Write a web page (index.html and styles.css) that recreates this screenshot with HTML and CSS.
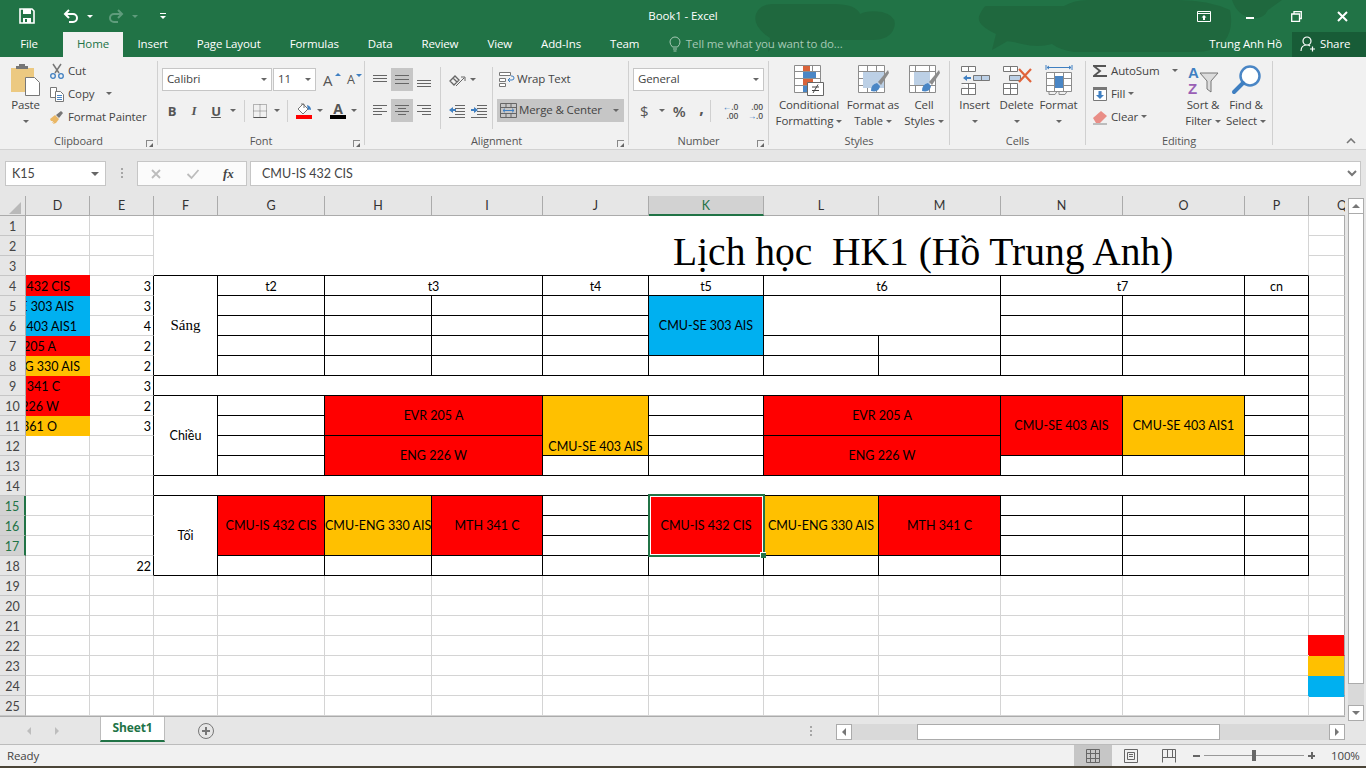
FILE: index.html
```html
<!DOCTYPE html>
<html lang="en">
<head>
  <meta charset="UTF-8">
  <title>Book1 - Excel</title>
  <link rel="stylesheet" href="styles.css">
</head>
<body>
<div class="window">

  <div class="chrome">
    <svg class="texture" width="1366" height="57" viewBox="0 0 1366 57">
      <path d="M772 4h62q22 0 26 10 8-4 22-2 16 4 12 16-4 12-22 12h-40q-12 8-30 6-14-2-26-2l-8 8 2-14q-18-12-14-24 4-10 16-10z"/>
      <path d="M986 6h78q10-6 24-6h90q30 0 52 10 4 20-6 32-10 10-30 10h-120q-14-2-22-8-14 4-30 0-16-4-16-2l-14 8 4-16q-22-10-16-20 4-8 6-8z"/>
      <path d="M1232 0h50l-14 10q-4 8-12 8-18 0-24-18z"/>
    </svg>
    <header class="titlebar">
      <div class="qat">
        <svg class="q-save" width="16" height="16" viewBox="0 0 16 16"><path d="M1 1h12l2 2v12H1z" fill="none" stroke="#fff" stroke-width="1.6"/><path d="M4 1h8v5H4zM4 10h8v5H4z" fill="#fff"/><path d="M6 11h2v3H6z" fill="#217346"/></svg>
        <svg class="q-undo" width="16" height="14" viewBox="0 0 16 14"><path d="M6 1 2 5l4 4M2 5h8a3.6 3.6 0 0 1 0 8H6" fill="none" stroke="#fff" stroke-width="2"/></svg>
        <i class="caret white q-c1"></i>
        <svg class="q-redo" width="16" height="14" viewBox="0 0 16 14"><path d="m10 1 4 4-4 4M14 5H6a3.6 3.6 0 0 0 0 8h4" fill="none" stroke="#5f9c7c" stroke-width="2"/></svg>
        <i class="caret dim q-c2"></i>
        <span class="q-more"><i></i><i class="caret white"></i></span>
      </div>
      <div class="doc-title">Book1 - Excel</div>
      <div class="win-btns">
        <svg width="14" height="11" viewBox="0 0 14 11"><path d="M.5.500h13v10H.5zM.5 2.500h13" fill="none" stroke="#fff"/><path d="m7 4 2.500 2.500h-1.500V9H6V6.500H4.500z" fill="#fff"/></svg>
        <svg width="10" height="10" viewBox="0 0 10 10"><path d="M1 6h8v2H1z" fill="#fff"/></svg>
        <svg width="11" height="11" viewBox="0 0 11 11"><path d="M3 2.500V.7h7.300v6.800H8.500M.7 3h7.800v7.300H.7z" fill="none" stroke="#fff" stroke-width="1.300"/></svg>
        <svg width="11" height="11" viewBox="0 0 11 11"><path d="m1 1 9 9M10 1l-9 9" stroke="#fff" stroke-width="2"/></svg>
      </div>
    </header>
    <nav class="tabs">
      <a class="tab tab-file">File</a>
      <a class="tab active">Home</a>
      <a class="tab">Insert</a>
      <a class="tab">Page Layout</a>
      <a class="tab">Formulas</a>
      <a class="tab">Data</a>
      <a class="tab">Review</a>
      <a class="tab">View</a>
      <a class="tab">Add-Ins</a>
      <a class="tab">Team</a>
      <span class="tell">
        <svg width="12" height="16" viewBox="0 0 12 16"><path d="M3.500 11Q1 8.500 1 6a5 5 0 0 1 10 0q0 2.500-2.500 5zM4 13h4M4.500 15h3" fill="none" stroke="#a6c9b5"/></svg>
        Tell me what you want to do...
      </span>
      <span class="user">Trung Anh Hồ</span>
      <span class="share">
        <svg width="16" height="16" viewBox="0 0 16 16"><path d="M7 9a4 4 0 1 0 0-8 4 4 0 0 0 0 8zM1 15q0-6 6-6 2 0 3 1M10 13h5M12.500 10.500v5" fill="none" stroke="#fff" stroke-width="1.200"/></svg>
        Share
      </span>
    </nav>
  </div>

  <div class="ribbon">

    <section class="group g-clip">
      <div class="body">
        <button class="big b-paste">
          <svg width="32" height="32" viewBox="0 0 32 32"><path d="M1 4h23v24H1z" fill="#ecc981"/><path d="M6 4V2h3V0h6v2h3v3H6z" fill="#767676"/><path d="M15.500 13.500h9l5 5v13h-14z" fill="#fff" stroke="#777"/></svg>
          <span>Paste</span><i class="caret"></i>
        </button>
        <div class="stack">
          <button class="small"><svg width="16" height="16" viewBox="0 0 16 16"><path d="M4 1l6 9M12 1 6 10" stroke="#777" stroke-width="1.500" fill="none"/><circle cx="4" cy="13" r="2.300" fill="none" stroke="#3f7fc1" stroke-width="1.300"/><circle cx="12" cy="13" r="2.300" fill="none" stroke="#3f7fc1" stroke-width="1.300"/></svg>Cut</button>
          <button class="small"><svg width="16" height="16" viewBox="0 0 16 16"><path d="M1.500 1.500h6v10h-6z" fill="#fff" stroke="#777"/><path d="M6.500 5.500h5l3 3v7h-8z" fill="#fff" stroke="#777"/><path d="M8 9.500h5M8 11.500h5M8 13.500h5" stroke="#4a86c5"/></svg>Copy<i class="caret c-copy"></i></button>
          <button class="small"><svg width="16" height="16" viewBox="0 0 16 16"><path d="M1 10l5-4 4 4-3 4-3 1 1-2-2 1 1-2-2 0z" fill="#eab765"/><path d="M7 6l5-4 2 2-4 5z" fill="#777"/></svg>Format Painter</button>
        </div>
      </div>
      <div class="label">Clipboard</div>
      <i class="launcher"></i>
    </section>

    <section class="group g-font">
      <div class="body col">
        <div class="row r-top">
          <div class="combo c-name"><span>Calibri</span><i class="caret"></i></div>
          <div class="combo c-size"><span>11</span><i class="caret"></i></div>
          <span class="grow-a big-a">A<i class="mini up"></i></span>
          <span class="grow-a small-a">A<i class="mini down"></i></span>
        </div>
        <div class="row r-low">
          <span class="fmt f-b">B</span>
          <span class="fmt f-i">I</span>
          <span class="fmt f-u">U</span>
          <i class="caret c-u"></i>
          <i class="vsep"></i>
          <svg class="f-border" width="14" height="14" viewBox="0 0 14 14"><path d="M.5.500h13v13H.5zM7 .5v13M.5 7h13" fill="none" stroke="#777" stroke-dasharray="1 1"/><path d="M.5 13.500h13" stroke="#555"/></svg>
          <i class="caret c-bd"></i>
          <i class="vsep"></i>
          <span class="swatch">
            <svg width="16" height="12" viewBox="0 0 16 12"><path d="M7 1l5 5-5 5-5-5z" fill="#fff" stroke="#777"/><path d="M5 1h3v4" fill="none" stroke="#777"/><path d="M11 2q4 1 4 5-2-1-3 0z" fill="#3f7fc1"/></svg>
            <b class="bar red-bar"></b>
          </span>
          <i class="caret c-sw"></i>
          <span class="swatch s-a"><span class="letter-a">A</span><b class="bar black-bar"></b></span>
          <i class="caret c-sw"></i>
        </div>
      </div>
      <div class="label">Font</div>
      <i class="launcher"></i>
    </section>

    <section class="group g-align">
      <div class="body">
        <div class="col a-icons">
          <div class="row r-top">
            <span class="al"><svg width="16" height="16" viewBox="0 0 16 16"><path d="M1 3.500h14M1 6.500h14M1 9.500h14" stroke="#666"/></svg></span>
            <span class="al on"><svg width="16" height="16" viewBox="0 0 16 16"><path d="M1 3.500h14M1 7.500h14M1 11.500h14" stroke="#666"/></svg></span>
            <span class="al"><svg width="16" height="16" viewBox="0 0 16 16"><path d="M1 8.500h14M1 11.500h14M1 14.500h14" stroke="#666"/></svg></span>
          </div>
          <div class="row r-low">
            <span class="al"><svg width="16" height="16" viewBox="0 0 16 16"><path d="M1 2.500h14M1 5.500h9M1 8.500h14M1 11.500h9" stroke="#666"/></svg></span>
            <span class="al on"><svg width="16" height="16" viewBox="0 0 16 16"><path d="M1 2.500h14M4 5.500h8M1 8.500h14M4 11.500h8" stroke="#666"/></svg></span>
            <span class="al"><svg width="16" height="16" viewBox="0 0 16 16"><path d="M1 2.500h14M6 5.500h9M1 8.500h14M6 11.500h9" stroke="#666"/></svg></span>
          </div>
        </div>
        <i class="vsep tall"></i>
        <div class="col a-orient">
          <div class="row r-top"><svg width="18" height="16" viewBox="0 0 18 16"><path d="M2 9l5-5 4 4-5 5zM5 6l4 4" fill="none" stroke="#666" stroke-width="1.300"/><path d="M8 14l8-8M13 5h4v4" fill="none" stroke="#666"/></svg><i class="caret"></i></div>
          <div class="row r-low ind">
            <svg width="17" height="14" viewBox="0 0 17 14"><path d="M7 1.500h10M7 4.500h10M7 7.500h10M7 10.500h10M1 13.500h16" stroke="#666"/><path d="M1 6l4-3v2h3v2H5v2z" fill="#3f7fc1"/></svg>
            <svg width="17" height="14" viewBox="0 0 17 14"><path d="M7 1.500h10M7 4.500h10M7 7.500h10M7 10.500h10M1 13.500h16" stroke="#666"/><path d="M8 6l-4-3v2H1v2h3v2z" fill="#3f7fc1"/></svg>
          </div>
        </div>
        <i class="vsep tall"></i>
        <div class="col a-wrap">
          <div class="row r-top wrapline"><svg width="16" height="16" viewBox="0 0 16 16"><path d="M.5 1.500h11v3H.5zM.5 7.500h6v3H.5zM.5 12.500h6v3H.5z" fill="#fff" stroke="#777"/><path d="M9 9h4a2 2 0 0 0 0-4h-1M11 7 9 9l2 2" fill="none" stroke="#3f7fc1"/></svg>Wrap Text</div>
          <div class="row r-low merge"><svg width="17" height="15" viewBox="0 0 17 15"><path d="M.5.500h16v14H.5zM.5 4.500h16M.5 10.500h16M6 .5v4M11 .5v4M6 10.500v4M11 10.500v4" fill="none" stroke="#666"/><path d="M3 7.500h11M5 5.700 3 7.500l2 1.800M12 5.700l2 1.800-2 1.800" fill="none" stroke="#3f7fc1"/></svg>Merge &amp; Center<i class="caret"></i></div>
        </div>
      </div>
      <div class="label">Alignment</div>
      <i class="launcher"></i>
    </section>

    <section class="group g-num">
      <div class="body col">
        <div class="row r-top"><div class="combo c-gen"><span>General</span><i class="caret"></i></div></div>
        <div class="row r-low">
          <span class="sym s-dollar">$</span><i class="caret"></i>
          <span class="sym s-pct">%</span>
          <span class="sym s-comma">,</span>
          <i class="vsep"></i>
          <span class="dec"><span><b>←</b>.0</span><span>.00</span></span>
          <span class="dec"><span>.00</span><span><b>→</b>.0</span></span>
        </div>
      </div>
      <div class="label">Number</div>
      <i class="launcher"></i>
    </section>

    <section class="group g-styles">
      <div class="body">
        <button class="big b-cf">
          <svg width="32" height="32" viewBox="0 0 32 32"><path d="M1.500 1.500h26v27h-26zM10.500 1.500v27M19.500 1.500v27M1.500 7.500h26M1.500 14.500h26M1.500 21.500h26" fill="#fff" stroke="#8c8c8c"/><path d="M10 2h7v5h-7z" fill="#d9633a"/><path d="M10 8h13v6H10z" fill="#4a86c5"/><path d="M10 15h10v6H10z" fill="#d9633a"/><path d="M10 22h5v6h-5z" fill="#4a86c5"/><path d="M14.500 18.500h16v13h-16z" fill="#fff" stroke="#666"/><path d="M19 23h7M19 26.500h7M25 20.500l-5 8.500" fill="none" stroke="#444"/></svg>
          <span>Conditional<br>Formatting<i class="caret tail"></i></span>
        </button>
        <button class="big b-ft">
          <svg width="32" height="32" viewBox="0 0 32 32"><path d="M1.500 1.500h26v27h-26zM10.500 1.500v27M19.500 1.500v27M1.500 7.500h26M1.500 14.500h26M1.500 21.500h26" fill="#fff" stroke="#8c8c8c"/><path d="M6 8h21v16H6z" fill="#bcd0e6"/><path d="M14 27q0-7 6-8l3 3q-1 7-9 5z" fill="#4a86c5"/><path d="M21 18 31 6l1 3-8 12z" fill="#8c8c8c"/></svg>
          <span>Format as<br>Table<i class="caret tail"></i></span>
        </button>
        <button class="big b-cs">
          <svg width="32" height="32" viewBox="0 0 32 32"><path d="M1.500 1.500h26v27h-26z" fill="#fff" stroke="#8c8c8c"/><path d="M1.500 7.500h26M1.500 21.500h26M7.500 1.500v6M21.500 1.500v6M7.500 21.500v7M21.500 21.500v7" stroke="#8c8c8c"/><path d="M6 8h16v13H6z" fill="#bcd0e6"/><path d="M14 27q0-7 6-8l3 3q-1 7-9 5z" fill="#4a86c5"/><path d="M21 18 31 6l1 3-8 12z" fill="#8c8c8c"/></svg>
          <span>Cell<br>Styles<i class="caret tail"></i></span>
        </button>
      </div>
      <div class="label">Styles</div>
    </section>

    <section class="group g-cells">
      <div class="body">
        <button class="big b-ins">
          <svg width="32" height="32" viewBox="0 0 32 32"><path d="M2.500 2.500h14v5h-14zM9.500 2.500v5M2.500 24.500h14v6h-14zM2.500 19.500h14v11M9.500 19.500v11" fill="#fff" stroke="#777"/><path d="M14.500 11.500h16v5h-16z" fill="#bcd0e6" stroke="#777"/><path d="M22.500 11.500v5" stroke="#777"/><path d="M4 14l4-3v2h4v2H8v2z" fill="#3f7fc1"/></svg>
          <span>Insert</span><i class="caret"></i>
        </button>
        <button class="big b-del">
          <svg width="32" height="32" viewBox="0 0 32 32"><path d="M2.500 2.500h14v5h-14zM9.500 2.500v5M2.500 19.500h14v11h-14zM2.500 24.500h14M9.500 19.500v11" fill="#fff" stroke="#777"/><path d="M8.500 11.500h11v5h-11z" fill="#bcd0e6" stroke="#777"/><path d="m18 5 12 13M30 5 18 18" stroke="#e0633a" stroke-width="2.200"/></svg>
          <span>Delete</span><i class="caret"></i>
        </button>
        <button class="big b-fmt">
          <svg width="32" height="32" viewBox="0 0 32 32"><path d="M3 1v5M29 1v5M4 3.500h24M6 2 4 3.500 6 5M26 2l2 1.500L26 5" fill="none" stroke="#3f7fc1"/><path d="M3.500 8.500h25v19h-25zM11.500 8.500v19M20.500 8.500v19M3.500 14.500h25M3.500 21.500h25" fill="#fff" stroke="#8c8c8c"/><path d="M12 12h8v12h-8z" fill="#4a86c5"/><path d="M6 27.500v3h6l2-3M16 27.500v3h6l2-3" fill="none" stroke="#8c8c8c"/></svg>
          <span>Format</span><i class="caret"></i>
        </button>
      </div>
      <div class="label">Cells</div>
    </section>

    <section class="group g-edit">
      <div class="body">
        <div class="stack st-edit">
          <button class="small"><svg width="16" height="16" viewBox="0 0 16 16"><path d="M1 2h13v2H4.500l5 4-5 4H15v2H1v-1.500L6.500 8 1 3.500z" fill="#555"/></svg>AutoSum<i class="caret c-sum"></i></button>
          <button class="small"><svg width="16" height="16" viewBox="0 0 16 16"><path d="M1.500 1.500h13v13h-13z" fill="#fff" stroke="#777"/><path d="M1 1h14v3H1z" fill="#777"/><path d="M6.500 5h3v4H12l-4 4-4-4h2.500z" fill="#3f7fc1"/></svg>Fill<i class="caret c-tail"></i></button>
          <button class="small"><svg width="16" height="16" viewBox="0 0 16 16"><path d="M1 9 9 2l6 5-7 7H4z" fill="#e98d86"/><path d="M1 15h14" stroke="#888"/></svg>Clear<i class="caret c-tail"></i></button>
        </div>
        <button class="big b-sort">
          <svg width="32" height="32" viewBox="0 0 32 32"><text class="az az-a" x="1" y="14">A</text><text class="az az-z" x="1" y="30">Z</text><path d="M13 9h18l-7 8v11l-4-3v-8z" fill="#dcdcdc" stroke="#777"/></svg>
          <span>Sort &amp;<br>Filter<i class="caret tail"></i></span>
        </button>
        <button class="big b-find">
          <svg width="32" height="32" viewBox="0 0 32 32"><circle cx="20" cy="12" r="9.500" fill="#fff" stroke="#4a86c5" stroke-width="2.500"/><path d="m13 19-9 9" stroke="#3f7fc1" stroke-width="4" stroke-linecap="round"/></svg>
          <span>Find &amp;<br>Select<i class="caret tail"></i></span>
        </button>
      </div>
      <div class="label">Editing</div>
    </section>

    <svg class="collapse" width="10" height="6" viewBox="0 0 10 6"><path d="M1 5l4-4 4 4" fill="none" stroke="#777" stroke-width="1.600"/></svg>
  </div>

  <div class="formula-bar">
    <div class="name-box"><span>K15</span><i class="caret"></i></div>
    <i class="grip"></i>
    <div class="fx-box">
      <svg width="12" height="12" viewBox="0 0 12 12"><path d="m2 2 8 8M10 2l-8 8" stroke="#bcbcbc" stroke-width="1.800"/></svg>
      <svg width="14" height="12" viewBox="0 0 14 12"><path d="m1.500 6 4 4 7-8" fill="none" stroke="#bcbcbc" stroke-width="1.800"/></svg>
      <span class="fx">fx</span>
    </div>
    <div class="formula-input">
      <span>CMU-IS 432 CIS</span>
      <svg width="10" height="7" viewBox="0 0 10 7"><path d="m1 1 4 4 4-4" fill="none" stroke="#777" stroke-width="2"/></svg>
    </div>
  </div>

  <div class="sheet">
    <div class="grid-wrap">
      <table class="grid">
        <colgroup>
          <col class="w-rh"><col class="w64"><col class="w64"><col class="w64"><col class="w107"><col class="w107"><col class="w111"><col class="w106"><col class="w115"><col class="w115"><col class="w122"><col class="w122"><col class="w122"><col class="w64"><col class="w36">
        </colgroup>
        <tr class="head">
          <th class="corner"><i></i></th><th>D</th><th>E</th><th>F</th><th>G</th><th>H</th><th>I</th><th>J</th><th class="cur">K</th><th>L</th><th>M</th><th>N</th><th>O</th><th>P</th><th class="col-q">Q</th>
        </tr>
        <tr><td class="rh">1</td><td></td><td></td><td colspan="11" rowspan="3" class="title bb">Lịch học  HK1 (Hồ Trung Anh)</td><td class="q"></td></tr>
        <tr><td class="rh">2</td><td></td><td></td><td class="q"></td></tr>
        <tr><td class="rh">3</td><td></td><td></td><td class="q"></td></tr>

        <tr><td class="rh">4</td><td class="red top d4"><div class="clip">432 CIS</div></td><td class="num br">3</td><td rowspan="5" class="k sess">Sáng</td><td class="k">t2</td><td colspan="2" class="k">t3</td><td class="k">t4</td><td class="k">t5</td><td colspan="2" class="k">t6</td><td colspan="2" class="k">t7</td><td class="k">cn</td><td class="q"></td></tr>
        <tr><td class="rh">5</td><td class="blu d5"><div class="clip">E 303 AIS</div></td><td class="num br">3</td><td class="k"></td><td class="k"></td><td class="k"></td><td class="k"></td><td rowspan="3" class="k blu">CMU-SE 303 AIS</td><td colspan="2" rowspan="2" class="k"></td><td class="k"></td><td class="k"></td><td class="k"></td><td class="q"></td></tr>
        <tr><td class="rh">6</td><td class="blu d6"><div class="clip">403 AIS1</div></td><td class="num br">4</td><td class="k"></td><td class="k"></td><td class="k"></td><td class="k"></td><td class="k"></td><td class="k"></td><td class="k"></td><td class="q"></td></tr>
        <tr><td class="rh">7</td><td class="red d7"><div class="clip">205 A</div></td><td class="num br">2</td><td class="k"></td><td class="k"></td><td class="k"></td><td class="k"></td><td class="k"></td><td class="k"></td><td class="k"></td><td class="k"></td><td class="k"></td><td class="q"></td></tr>
        <tr><td class="rh">8</td><td class="org d8"><div class="clip">G 330 AIS</div></td><td class="num br">2</td><td class="k"></td><td class="k"></td><td class="k"></td><td class="k"></td><td class="k"></td><td class="k"></td><td class="k"></td><td class="k"></td><td class="k"></td><td class="k"></td><td class="q"></td></tr>
        <tr><td class="rh">9</td><td class="red d9"><div class="clip">341 C</div></td><td class="num br">3</td><td colspan="11" class="k"></td><td class="q"></td></tr>

        <tr><td class="rh">10</td><td class="red d10"><div class="clip">226 W</div></td><td class="num br">2</td><td rowspan="4" class="k">Chiều</td><td class="k"></td><td colspan="2" rowspan="2" class="k red">EVR 205 A</td><td rowspan="3" class="k org low">CMU-SE 403 AIS</td><td class="k"></td><td colspan="2" rowspan="2" class="k red">EVR 205 A</td><td rowspan="3" class="k red">CMU-SE 403 AIS</td><td rowspan="3" class="k org">CMU-SE 403 AIS1</td><td class="k"></td><td class="q"></td></tr>
        <tr><td class="rh">11</td><td class="org d11"><div class="clip">361 O</div></td><td class="num br">3</td><td class="k"></td><td class="k"></td><td class="k"></td><td class="q"></td></tr>
        <tr><td class="rh">12</td><td></td><td class="br"></td><td class="k"></td><td colspan="2" rowspan="2" class="k red">ENG 226 W</td><td class="k"></td><td colspan="2" rowspan="2" class="k red">ENG 226 W</td><td class="k"></td><td class="q"></td></tr>
        <tr><td class="rh">13</td><td></td><td class="br"></td><td class="k"></td><td class="k"></td><td class="k"></td><td class="k"></td><td class="k"></td><td class="k"></td><td class="q"></td></tr>
        <tr><td class="rh">14</td><td></td><td class="br"></td><td colspan="11" class="k"></td><td class="q"></td></tr>

        <tr><td class="rh sel-row">15</td><td></td><td class="br"></td><td rowspan="4" class="k">Tối</td><td rowspan="3" class="k red">CMU-IS 432 CIS</td><td rowspan="3" class="k org">CMU-ENG 330 AIS</td><td rowspan="3" class="k red">MTH 341 C</td><td class="k"></td><td rowspan="3" class="k red active-cell">CMU-IS 432 CIS<span class="sel"><i></i></span></td><td rowspan="3" class="k org">CMU-ENG 330 AIS</td><td rowspan="3" class="k red">MTH 341 C</td><td class="k"></td><td class="k"></td><td class="k"></td><td class="q"></td></tr>
        <tr><td class="rh sel-row">16</td><td></td><td class="br"></td><td class="k"></td><td class="k"></td><td class="k"></td><td class="k"></td><td class="q"></td></tr>
        <tr><td class="rh sel-row">17</td><td></td><td class="br"></td><td class="k"></td><td class="k"></td><td class="k"></td><td class="k"></td><td class="q"></td></tr>
        <tr><td class="rh">18</td><td></td><td class="num br">22</td><td class="k"></td><td class="k"></td><td class="k"></td><td class="k"></td><td class="k"></td><td class="k"></td><td class="k"></td><td class="k"></td><td class="k"></td><td class="k"></td><td class="q"></td></tr>

        <tr><td class="rh">19</td><td></td><td></td><td></td><td></td><td></td><td></td><td></td><td></td><td></td><td></td><td></td><td></td><td></td><td class="q"></td></tr>
        <tr><td class="rh">20</td><td></td><td></td><td></td><td></td><td></td><td></td><td></td><td></td><td></td><td></td><td></td><td></td><td></td><td class="q"></td></tr>
        <tr><td class="rh">21</td><td></td><td></td><td></td><td></td><td></td><td></td><td></td><td></td><td></td><td></td><td></td><td></td><td></td><td class="q"></td></tr>
        <tr><td class="rh">22</td><td></td><td></td><td></td><td></td><td></td><td></td><td></td><td></td><td></td><td></td><td></td><td></td><td></td><td class="q red legend-top"></td></tr>
        <tr><td class="rh">23</td><td></td><td></td><td></td><td></td><td></td><td></td><td></td><td></td><td></td><td></td><td></td><td></td><td></td><td class="q org legend"></td></tr>
        <tr><td class="rh">24</td><td></td><td></td><td></td><td></td><td></td><td></td><td></td><td></td><td></td><td></td><td></td><td></td><td></td><td class="q blu legend"></td></tr>
        <tr><td class="rh">25</td><td></td><td></td><td></td><td></td><td></td><td></td><td></td><td></td><td></td><td></td><td></td><td></td><td></td><td class="q"></td></tr>
      </table>
    </div>
    <div class="vscroll">
      <span class="sb-btn"><i class="tri up"></i></span>
      <span class="v-thumb"></span>
      <span class="v-track"></span>
      <span class="sb-btn"><i class="tri down"></i></span>
    </div>
  </div>

  <div class="sheet-tabs">
    <div class="nav-arrows"><i class="tri left pale"></i><i class="tri right pale"></i></div>
    <div class="sheet-tab">Sheet1</div>
    <svg class="add-sheet" width="18" height="18" viewBox="0 0 18 18"><circle cx="9" cy="9" r="7.500" fill="none" stroke="#777"/><path d="M5 9h8M9 5v8" stroke="#777" stroke-width="2"/></svg>
    <i class="grip g2"></i>
    <div class="hscroll">
      <span class="sb-btn"><i class="tri left"></i></span>
      <span class="h-track t1"></span>
      <span class="h-thumb"></span>
      <span class="h-track t2"></span>
      <span class="sb-btn"><i class="tri right"></i></span>
    </div>
  </div>

  <footer class="status">
    <span class="ready">Ready</span>
    <div class="views">
      <span class="view on"><svg width="14" height="14" viewBox="0 0 14 14"><path d="M.5.500h13v13H.5zM4.500.5v13M9.500.5v13M.5 4.500h13M.5 9.500h13" fill="none" stroke="#666"/></svg></span>
      <span class="view"><svg width="14" height="14" viewBox="0 0 14 14"><path d="M.5.500h13v13H.5zM3.500 3.500h7v7h-7zM5 5.500h4M5 7.500h4" fill="none" stroke="#666"/></svg></span>
      <span class="view"><svg width="14" height="14" viewBox="0 0 14 14"><path d="M.5 13.500V.5h13v13M.5 8.500h13M5.500.5v8M10.500.5v8" fill="none" stroke="#666"/></svg></span>
    </div>
    <div class="zoom">
      <i class="zoom-minus"></i>
      <span class="slider"><i></i></span>
      <i class="zoom-plus"></i>
    </div>
    <span class="pct">100%</span>
  </footer>
  <div class="desktop"></div>
</div>
</body>
</html>
```

FILE: styles.css
```css
* {
  box-sizing: border-box;
}
html, body {
  margin: 0;
  height: 100%;
  overflow: hidden;
}
body {
  font-family: "Open Sans", "Noto Sans", sans-serif;
  font-size: 11.5px;
  letter-spacing: -0.12px;
  color: #444;
  background: #e6e6e6;
}
button {
  font: inherit;
  letter-spacing: inherit;
  color: inherit;
  background: none;
  border: 0;
  padding: 0;
}
.window {
  width: 1366px;
  height: 768px;
  display: flex;
  flex-direction: column;
}

/* shared bits */
.caret {
  display: inline-block;
  width: 0;
  height: 0;
  border-left: 3px solid transparent;
  border-right: 3px solid transparent;
  border-top: 3px solid #666;
}
.caret.white { border-top-color: #fff; }
.caret.dim { border-top-color: #5f9c7c; }
.vsep {
  display: block;
  width: 1px;
  height: 22px;
  background: #d0d0d0;
}
.vsep.tall {
  height: 62px;
  margin-top: 6px;
}
.tri {
  display: block;
  width: 0;
  height: 0;
  border: 4px solid transparent;
}
.tri.up { border-top: 0; border-bottom: 4px solid #777; }
.tri.down { border-bottom: 0; border-top: 4px solid #777; }
.tri.left { border-left: 0; border-right: 4px solid #777; }
.tri.right { border-right: 0; border-left: 4px solid #777; }
.tri.left.pale { border-right-color: #bdbdbd; }
.tri.right.pale { border-left-color: #bdbdbd; }

/* title bar + tabs */
.chrome {
  position: relative;
  height: 57px;
  background: #217346;
  color: #fff;
  flex: none;
}
.texture {
  position: absolute;
  left: 0;
  top: 0;
  fill: #1f683e;
}
.titlebar {
  position: relative;
  height: 32px;
  display: grid;
  grid-template-columns: 1fr auto 1fr;
  align-items: center;
}
.qat {
  display: flex;
  align-items: center;
  padding-left: 19px;
}
.q-undo { margin-left: 28px; }
.q-c1 { margin-left: 8px; }
.q-redo { margin-left: 15px; }
.q-c2 { margin-left: 8px; }
.q-more {
  margin-left: 22px;
  display: flex;
  flex-direction: column;
  align-items: center;
  gap: 2px;
}
.q-more i:first-child {
  width: 6px;
  height: 1px;
  background: #fff;
}
.doc-title {
  padding-bottom: 1px;
}
.win-btns {
  display: flex;
  align-items: center;
  justify-content: flex-end;
}
.win-btns svg:nth-child(1) { margin-right: 34px; }
.win-btns svg:nth-child(2) { margin-right: 36px; }
.win-btns svg:nth-child(3) { margin-right: 35px; }
.win-btns svg:nth-child(4) { margin-right: 18px; }

.tabs {
  position: relative;
  height: 25px;
  display: flex;
  align-items: stretch;
}
.tab {
  display: flex;
  align-items: center;
  padding: 0 14.5px 2px;
}
.tab-file {
  width: 58px;
  justify-content: center;
  padding: 0 0 2px;
  margin-right: 5px;
}
.tab.active {
  background: #f1f1f1;
  color: #217346;
  width: 60px;
  justify-content: center;
  padding: 0 0 2px;
}
.tell {
  display: flex;
  align-items: center;
  gap: 5px;
  margin-left: 15px;
  padding-bottom: 2px;
  color: #a6c9b5;
}
.user {
  margin-left: auto;
  align-self: center;
  margin-right: 10px;
  padding-bottom: 2px;
}
.share {
  width: 74px;
  background: #185c37;
  display: flex;
  align-items: center;
  gap: 4px;
  padding: 0 0 2px 8px;
}

/* ribbon */
.ribbon {
  position: relative;
  height: 93px;
  flex: none;
  display: flex;
  padding-top: 4px;
  background: #f1f1f1;
  border-bottom: 1px solid #d2d2d2;
}
.group {
  position: relative;
  height: 84px;
  border-right: 1px solid #d0d0d0;
  display: flex;
  flex-direction: column;
}
.g-clip { width: 158px; }
.g-font { width: 207px; }
.g-align { width: 264px; }
.g-num { width: 140px; }
.g-styles { width: 181px; }
.g-cells { width: 136px; }
.g-edit { width: 187px; }
.body {
  height: 72px;
  display: flex;
}
.body.col,
.col {
  flex-direction: column;
  display: flex;
}
.label {
  height: 12px;
  line-height: 16px;
  text-align: center;
  font-size: 11px;
  color: #555;
  white-space: nowrap;
}
.launcher {
  position: absolute;
  right: 4px;
  bottom: -2px;
  width: 7px;
  height: 7px;
  border-left: 1px solid #888;
  border-top: 1px solid #888;
}
.launcher::after {
  content: "";
  position: absolute;
  right: 0;
  bottom: 0;
  border-left: 4px solid transparent;
  border-bottom: 4px solid #666;
}
.big {
  display: flex;
  flex-direction: column;
  align-items: center;
  padding-top: 3px;
  line-height: 16px;
  text-align: center;
  white-space: nowrap;
}
.big svg {
  margin-bottom: 1px;
  flex: none;
}
.big > .caret { margin-top: 7px; }
.caret.tail {
  margin-left: 3px;
  vertical-align: 2px;
}
.stack {
  display: flex;
  flex-direction: column;
  margin-top: -1px;
}
.small {
  height: 23px;
  display: flex;
  align-items: center;
  gap: 3px;
  white-space: nowrap;
  padding-bottom: 2px;
}
.small svg { flex: none; }
.row {
  display: flex;
  align-items: center;
  white-space: nowrap;
}
.r-top {
  height: 23px;
  margin-top: 7px;
}
.r-low {
  height: 23px;
  margin-top: 8px;
}
.combo {
  height: 23px;
  background: #fff;
  border: 1px solid #c6c6c6;
  display: flex;
  align-items: center;
  justify-content: space-between;
  padding: 0 4px 2px;
}
.combo .caret { margin-top: 2px; }

/* clipboard */
.b-paste {
  width: 37px;
  margin-left: 7px;
}
.g-clip .stack { margin-left: 5px; }
.c-copy { margin-left: 9px; }

/* font */
.g-font .r-top { padding-left: 4px; }
.g-font .r-low { padding-left: 3px; }
.c-name { width: 110px; }
.c-size { width: 43px; margin-left: 1px; }
.grow-a {
  position: relative;
  color: #555;
}
.big-a { font-size: 15px; margin-left: 7px; width: 22px; }
.small-a { font-size: 12.5px; margin-left: 2px; }
.mini {
  position: absolute;
  top: 3px;
  right: 0;
  border-left: 3px solid transparent;
  border-right: 3px solid transparent;
}
.big-a .mini { right: 4px; }
.small-a .mini { right: -7px; }
.mini.up { border-bottom: 3px solid #3f7fc1; }
.mini.down { border-top: 3px solid #3f7fc1; }
.fmt {
  width: 22px;
  text-align: center;
  font-size: 13px;
  color: #555;
  font-weight: 700;
}
.f-i { font-style: italic; font-family: "Liberation Serif", serif; }
.f-u { text-decoration: underline; }
.c-u { margin: 0 8px 0 3px; }
.c-bd { margin: 0 7px; }
.c-sw { margin: 0 7px 0 5px; }
.f-border { margin-left: 8px; }
.swatch {
  width: 16px;
  margin-left: 8px;
  display: flex;
  flex-direction: column;
  align-items: center;
}
.s-a { margin-left: 0; }
.letter-a {
  font-size: 14px;
  font-weight: 700;
  line-height: 13px;
  color: #555;
}
.bar {
  display: block;
  width: 16px;
  height: 4px;
}
.red-bar { background: #f00; }
.black-bar { background: #000; }

/* alignment */
.a-icons { width: 71px; margin-left: 4px; }
.al {
  width: 22px;
  height: 23px;
  display: flex;
  align-items: center;
  justify-content: center;
}
.al.on { background: #c6c6c6; }
.a-orient { width: 51px; padding-left: 7px; }
.a-orient .caret { margin-left: 4px; }
.ind { gap: 5px; }
.a-wrap { margin-left: 4px; }
.wrapline { gap: 2px; margin-left: 2px; padding-bottom: 2px; }
.merge {
  width: 127px;
  background: #c6c6c6;
  gap: 2px;
  padding: 0 0 2px 3px;
}
.merge svg { margin-top: 2px; }
.merge .caret { margin: 2px 5px 0 auto; }

/* number */
.g-num .r-top { padding-left: 4px; }
.c-gen { width: 131px; }
.g-num .r-low { padding-left: 11px; }
.sym {
  color: #555;
  font-size: 16px;
}
.s-dollar { width: 14px; font-size: 15px; }
.g-num .r-low .caret { margin-left: 5px; margin-right: 8px; }
.s-pct { width: 21px; font-size: 15px; font-weight: 600; }
.s-comma { width: 16px; text-align: center; font-weight: 700; margin-top: -6px; }
.g-num .vsep { margin-left: 1px; margin-right: 7px; }
.dec {
  width: 25px;
  display: flex;
  flex-direction: column;
  align-items: flex-end;
  font-size: 8.5px;
  line-height: 9px;
  font-weight: 600;
  color: #555;
  padding-right: 5px;
}
.dec b { color: #3f7fc1; }

/* styles */
.b-cf { width: 70px; margin-left: 5px; }
.b-ft { width: 58px; }
.b-cs { width: 44px; }

/* cells */
.b-ins { width: 37px; margin-left: 6px; }
.b-del { width: 37px; margin-left: 5px; }
.b-fmt { width: 41px; margin-left: 3px; }

/* editing */
.st-edit { width: 92px; margin-left: 6px; }
.c-sum { margin-left: 9px; }
.b-sort { width: 38px; }
.b-find { width: 42px; margin-left: 3px; }
.az {
  font-family: "Liberation Sans", sans-serif;
  font-size: 15px;
  font-weight: 700;
}
.az-a { fill: #3f7fc1; }
.az-z { fill: #9a5fb5; }
.collapse {
  position: absolute;
  right: 10px;
  top: 81px;
}

/* formula bar */
.formula-bar {
  height: 46px;
  flex: none;
  display: flex;
  align-items: flex-start;
  padding: 11px 5px 0;
}
.name-box {
  width: 101px;
  height: 25px;
  background: #fff;
  border: 1px solid #c6c6c6;
  display: flex;
  align-items: center;
  justify-content: space-between;
  padding: 0 6px;
  font-family: "Lato", sans-serif;
  font-size: 12.5px;
  letter-spacing: 0;
}
.name-box .caret {
  border-left-width: 4px;
  border-right-width: 4px;
  border-top-width: 4px;
}
.grip {
  width: 2px;
  height: 10px;
  margin: 7px 14px 0 15px;
  background: repeating-linear-gradient(#a6a6a6 0 2px, transparent 2px 4px);
}
.fx-box {
  width: 110px;
  height: 25px;
  background: #fbfbfb;
  border: 1px solid #c6c6c6;
  display: flex;
  align-items: center;
  padding-left: 12px;
  gap: 24px;
}
.fx {
  font-family: "Liberation Serif", serif;
  font-style: italic;
  font-weight: 700;
  font-size: 13px;
  margin-left: -1px;
}
.formula-input {
  width: 1111px;
  height: 25px;
  margin-left: 3px;
  background: #fff;
  border: 1px solid #c6c6c6;
  display: flex;
  align-items: center;
  justify-content: space-between;
  padding: 0 3px 0 11px;
  font-family: "Lato", sans-serif;
  font-size: 12.5px;
  letter-spacing: 0;
}

/* sheet */
.sheet {
  height: 521px;
  flex: none;
  display: flex;
}
.grid-wrap {
  width: 1345px;
  background: #fff;
  border-bottom: 1px solid #ababab;
  overflow: hidden;
}
.grid {
  width: 1345px;
  table-layout: fixed;
  border-collapse: separate;
  border-spacing: 0;
  font-family: "Lato", sans-serif;
  font-size: 12.5px;
  letter-spacing: 0;
  color: #000;
}
.w-rh { width: 26px; }
.w64 { width: 64px; }
.w107 { width: 107px; }
.w111 { width: 111px; }
.w106 { width: 106px; }
.w115 { width: 115px; }
.w122 { width: 122px; }
.w36 { width: 36px; }
.grid th,
.grid td {
  height: 20px;
  padding: 0;
  line-height: 17px;
  text-align: center;
  white-space: nowrap;
  overflow: hidden;
  border-right: 1px solid #d4d4d4;
  border-bottom: 1px solid #d4d4d4;
}
.grid td { padding-top: 1px; }
.grid td[rowspan] { padding-top: 0; }
.grid th {
  background: #e6e6e6;
  font-weight: 400;
  color: #333;
  border-right-color: #ababab;
  border-bottom-color: #ababab;
}
.grid th.cur {
  background: #d2d2d2;
  color: #217346;
  border-bottom: 2px solid #217346;
}
.grid th.col-q {
  text-align: left;
  padding-left: 28px;
  border-right: 0;
}
.corner i {
  display: block;
  margin: 5px 0 0 9px;
  border-left: 12px solid transparent;
  border-bottom: 12px solid #b9b9b9;
  width: 0;
}
.grid td.rh {
  background: #e6e6e6;
  color: #444;
  border-right-color: #ababab;
  border-bottom-color: #c6c6c6;
}
.grid td.sel-row {
  background: #d2d2d2;
  color: #217346;
  border-right: 2px solid #217346;
}
.grid td.num {
  text-align: right;
  padding-right: 2px;
}
.grid td.br { border-right-color: #000; }
.grid td.bb { border-bottom-color: #000; }
.grid td.title {
  text-align: left;
  padding: 0 0 0 519px;
  white-space: pre;
  vertical-align: bottom;
  font-family: "Liberation Serif", serif;
  font-size: 39.5px;
  line-height: 46px;
  overflow: visible;
}
.grid td.sess {
  font-family: "Liberation Serif", serif;
  font-size: 15px;
}
.grid td.low { vertical-align: bottom; }
.grid td.red { background: #f00; border-color: #f00; }
.grid td.org { background: #ffc000; border-color: #ffc000; }
.grid td.blu { background: #00b0f0; border-color: #00b0f0; }
.grid td.top { box-shadow: 0 -1px #f00; }
.grid td.legend-top { box-shadow: -1px -1px #f00; overflow: visible; }
.grid td.org.legend { box-shadow: -1px 0 #ffc000; }
.grid td.blu.legend { box-shadow: -1px 0 #00b0f0, 0 1px #00b0f0; }
.grid td.k { border-color: #000; }
.grid td.q { border-right-color: #ababab; }
.clip {
  display: flex;
  justify-content: flex-end;
  overflow: hidden;
}
.d4 .clip { padding-right: 19px; }
.d5 .clip { padding-right: 15px; }
.d6 .clip { padding-right: 12px; }
.d7 .clip { padding-right: 33px; }
.d8 .clip { padding-right: 9px; }
.d9 .clip { padding-right: 29px; }
.d10 .clip { padding-right: 30px; }
.d11 .clip { padding-right: 32px; }
.grid td.active-cell {
  position: relative;
  overflow: visible;
}
.sel {
  position: absolute;
  left: -1px;
  top: -2px;
  right: -2px;
  bottom: -2px;
  border: 2px solid #217346;
  box-shadow: inset 0 0 0 1px #fff;
}
.sel i {
  position: absolute;
  right: -3px;
  bottom: -3px;
  width: 6px;
  height: 6px;
  background: #217346;
  border-left: 1px solid #fff;
  border-top: 1px solid #fff;
}

/* scrollbars */
.sb-btn {
  width: 16px;
  height: 16px;
  background: #fff;
  border: 1px solid #ababab;
  display: flex;
  align-items: center;
  justify-content: center;
  flex: none;
}
.vscroll {
  margin-left: 3px;
  width: 16px;
  padding-top: 2px;
  display: flex;
  flex-direction: column;
}
.v-thumb {
  height: 470px;
  flex: none;
  background: #fff;
  border: 1px solid #ababab;
  border-top: 0;
}
.v-track {
  height: 21px;
  flex: none;
  background: #d9d9d9;
}

/* sheet tab strip */
.sheet-tabs {
  height: 28px;
  flex: none;
  display: flex;
  align-items: flex-start;
  border-bottom: 1px solid #bcbcbc;
}
.nav-arrows {
  width: 100px;
  display: flex;
  gap: 24px;
  padding: 10px 0 0 27px;
}
.sheet-tab {
  width: 65px;
  height: 25px;
  background: #fff;
  color: #217346;
  font-weight: 700;
  font-size: 12px;
  text-align: center;
  line-height: 22px;
  border: 1px solid #bcbcbc;
  border-top: 0;
  border-bottom: 2px solid #217346;
}
.add-sheet { margin: 5px 0 0 32px; }
.g2 { margin: 9px 0 0 595px; }
.hscroll {
  position: absolute;
  left: 836px;
  top: 724px;
  width: 509px;
  display: flex;
  height: 16px;
}
.h-track { background: #d9d9d9; height: 16px; }
.t1 { width: 65px; }
.t2 { width: 109px; }
.h-thumb {
  width: 303px;
  background: #fff;
  border: 1px solid #ababab;
}

/* status bar */
.status {
  height: 21px;
  flex: none;
  background: #f1f1f1;
  display: flex;
  align-items: center;
  padding-left: 7px;
}
.views {
  margin-left: auto;
  display: flex;
  height: 21px;
}
.view {
  width: 38px;
  display: flex;
  align-items: center;
  justify-content: center;
}
.view.on { background: #c6c6c6; }
.zoom {
  display: flex;
  align-items: center;
  margin-left: 5px;
  width: 122px;
}
.zoom-minus,
.zoom-plus {
  position: relative;
  width: 7px;
  height: 2px;
  background: #666;
  flex: none;
}
.zoom-plus::after {
  content: "";
  position: absolute;
  left: 2.5px;
  top: -2.5px;
  width: 2px;
  height: 7px;
  background: #666;
}
.slider {
  position: relative;
  width: 100px;
  height: 1px;
  margin: 0 4px;
  background: #999;
}
.slider i {
  position: absolute;
  left: 48px;
  top: -5px;
  width: 4px;
  height: 11px;
  background: #666;
}
.pct {
  width: 35px;
  margin-left: 16px;
}
.desktop {
  height: 2px;
  background: #4b4538;
  flex: none;
}
```
